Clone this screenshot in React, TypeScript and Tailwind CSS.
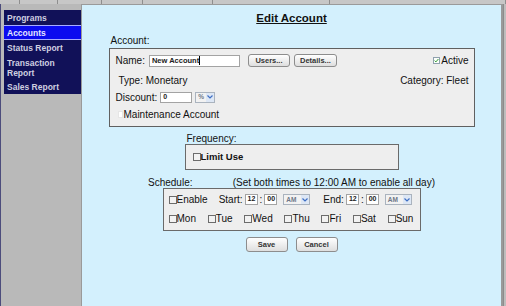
const font = "font-['Liberation_Sans',Arial,sans-serif]"

const sideLinks = [
  { name: "Programs", h: "h-[15px]" },
  { name: "Accounts", h: "h-[15px]", active: true },
  { name: "Status Report", h: "h-[15px]" },
  { name: "Transaction Report", h: "h-[25px]" },
  { name: "Sales Report", h: "h-[14px]" },
]

const tabs = ["w-[20px]", "w-[38px]", "w-[44px]", "w-[41px]", "w-[70px]", "w-[117px]", "w-[176px]"]

const days = ["Mon", "Tue", "Wed", "Thu", "Fri", "Sat", "Sun"]

function Box() {
  return <span className="inline-block w-[8px] h-[8px] border border-[#6c6c6c] bg-[#f2f2f2] shrink-0" />
}

function Btn({ label, className }: { label: string; className: string }) {
  return (
    <span
      className={`${className} flex items-center justify-center rounded-[3px] border border-[#8d8d8d] bg-gradient-to-b from-[#ffffff] to-[#dedede] text-[7.5px] font-bold text-[#333]`}
    >
      {label}
    </span>
  )
}

function Sel({ label, className }: { label: string; className: string }) {
  return (
    <span className={`${className} h-[11px] flex items-center justify-between border border-[#aab3be] bg-[#f2f2f2] pl-[2px] text-[6.5px] font-bold text-[#6f7888]`}>
      {label}
      <span className="w-[8px] h-full flex items-center justify-center bg-[#dde7f5]">
        <svg width="6" height="4" viewBox="0 0 6 4">
          <path d="M0.5 0.5 L3 3 L5.5 0.5" fill="none" stroke="#3f6fc4" strokeWidth="1.2" />
        </svg>
      </span>
    </span>
  )
}

function Field({ value, className }: { value: string; className: string }) {
  return (
    <span className={`${className} flex items-center border border-[#a3a3a3] bg-white pl-[2px] text-[7px] font-bold text-[#222]`}>
      {value}
    </span>
  )
}

export default function App() {
  return (
    <div className={`w-[506px] h-[306px] overflow-hidden bg-[#b9b9b9] flex flex-col ${font} text-[#111]`}>
      {/* tab strip */}
      <div className="h-[4px] shrink-0 flex bg-[#c7c7c7]">
        {tabs.map((w, i) => (
          <span key={i} className={`${w} h-full border-r border-[#8e8e8e]`} />
        ))}
      </div>

      <div className="flex flex-1 min-h-0">
        {/* sidebar */}
        <div className="w-[81px] shrink-0 border-l border-[#4c4c7c] pl-[3px] pt-[6px]">
          <nav className="w-[77px] bg-[#111158] flex flex-col">
            {sideLinks.map((l) => (
              <div
                key={l.name}
                className={`${l.h} flex items-center pl-[3px] text-[8.5px] leading-[10px] font-bold ${
                  l.active ? "bg-[#0b0bef] border-y border-[#a7abff] text-[#e6e6ff]" : "text-[#cfcfe0]"
                }`}
              >
                {l.name === "Transaction Report" ? (
                  <span>
                    Transaction
                    <br />
                    Report
                  </span>
                ) : (
                  l.name
                )}
              </div>
            ))}
          </nav>
        </div>

        {/* main panel */}
        <main className="w-[422px] shrink-0 bg-[#d3f0fd] border-l border-t border-r-2 border-[#9a9a9a] pt-[6px] text-[10px]">
          <h1 className="h-[14px] leading-[14px] text-center text-[11.5px] font-bold underline">Edit Account</h1>

          {/* Account */}
          <div className="w-[366px] mx-auto mt-[10px]">
            <div className="h-[12px] leading-[12px] pl-[2px]">Account:</div>
            <div className="mt-[1px] border border-[#606060] bg-[#eeeeee] pt-[5px] pb-[5px] pl-[6px] pr-[5px]">
              <div className="h-[13px] flex items-center justify-between">
                <div className="flex items-center">
                  <span>Name:</span>
                  <span className="ml-[4px] w-[91px] h-[12px] flex items-center border border-[#a3a3a3] bg-white pl-[2px] text-[7.5px] font-bold text-[#222]">
                    New Account
                    <span className="w-px h-[9px] bg-black" />
                  </span>
                  <Btn label="Users..." className="ml-[8px] w-[42px] h-[13px]" />
                  <Btn label="Details..." className="ml-[4px] w-[43px] h-[13px]" />
                </div>
                <div className="flex items-center">
                  <svg width="7" height="7" viewBox="0 0 7 7" className="mr-px">
                    <rect x="0.5" y="0.5" width="6" height="6" fill="#fbfffb" stroke="#8fa0ad" />
                    <path d="M1.6 3.6 L2.9 4.9 L5.4 2" fill="none" stroke="#2f9a2f" strokeWidth="1" />
                  </svg>
                  <span>Active</span>
                </div>
              </div>
              <div className="mt-[6px] h-[14px] flex items-center justify-between">
                <span className="pl-[3px]">Type: Monetary</span>
                <span>Category: Fleet</span>
              </div>
              <div className="mt-[3px] h-[14px] flex items-center">
                <span>Discount:</span>
                <Field value="0" className="ml-[3px] w-[32px] h-[11px]" />
                <Sel label="%" className="ml-[3px] w-[20px]" />
              </div>
              <div className="mt-[3px] h-[14px] flex items-center pl-[2px]">
                <span className="w-[5px] h-[7px] bg-white border border-[#e6e6e6] mr-px" />
                <span>Maintenance Account</span>
              </div>
            </div>
          </div>

          {/* Frequency */}
          <div className="w-[214px] mx-auto mt-[7px]">
            <div className="h-[10px] leading-[10px] pl-[2px]">Frequency:</div>
            <div className="h-[26px] border border-[#6a6a6a] bg-[#eeeeee] flex items-center pl-[7px]">
              <Box />
              <span className="font-bold text-[9.5px]">Limit Use</span>
            </div>
          </div>

          {/* Schedule */}
          <div className="w-[287px] mx-auto mt-[7px] h-[11px] leading-[11px] flex justify-between">
            <span>Schedule:</span>
            <span>(Set both times to 12:00 AM to enable all day)</span>
          </div>
          <div className="w-[258px] mx-auto border border-[#6a6a6a] bg-[#eeeeee] pt-[4px] pb-[5px] pl-[5px] pr-[6px]">
            <div className="h-[13px] flex items-center">
              <Box />
              <span>Enable</span>
              <span className="ml-[11px]">Start:</span>
              <Field value="12" className="ml-[2px] w-[13px] h-[11px] text-[6.5px]" />
              <span className="px-[2px]">:</span>
              <Field value="00" className="w-[13px] h-[11px] text-[6.5px]" />
              <Sel label="AM" className="ml-[6px] w-[27px]" />
              <span className="ml-[13px]">End:</span>
              <Field value="12" className="ml-[2px] w-[13px] h-[11px] text-[6.5px]" />
              <span className="px-[2px]">:</span>
              <Field value="00" className="w-[13px] h-[11px] text-[6.5px]" />
              <Sel label="AM" className="ml-[6px] w-[27px]" />
            </div>
            <div className="mt-[6px] h-[13px] flex items-center justify-between">
              {days.map((d) => (
                <span key={d} className="flex items-center">
                  <Box />
                  {d}
                </span>
              ))}
            </div>
          </div>

          <div className="mt-[6px] flex justify-center gap-[8px]">
            <Btn label="Save" className="w-[42px] h-[15px]" />
            <Btn label="Cancel" className="w-[42px] h-[15px]" />
          </div>
        </main>

        <div className="flex-1 border-l border-[#8c8c8c] bg-[#bdbdbd]" />
      </div>
    </div>
  )
}
